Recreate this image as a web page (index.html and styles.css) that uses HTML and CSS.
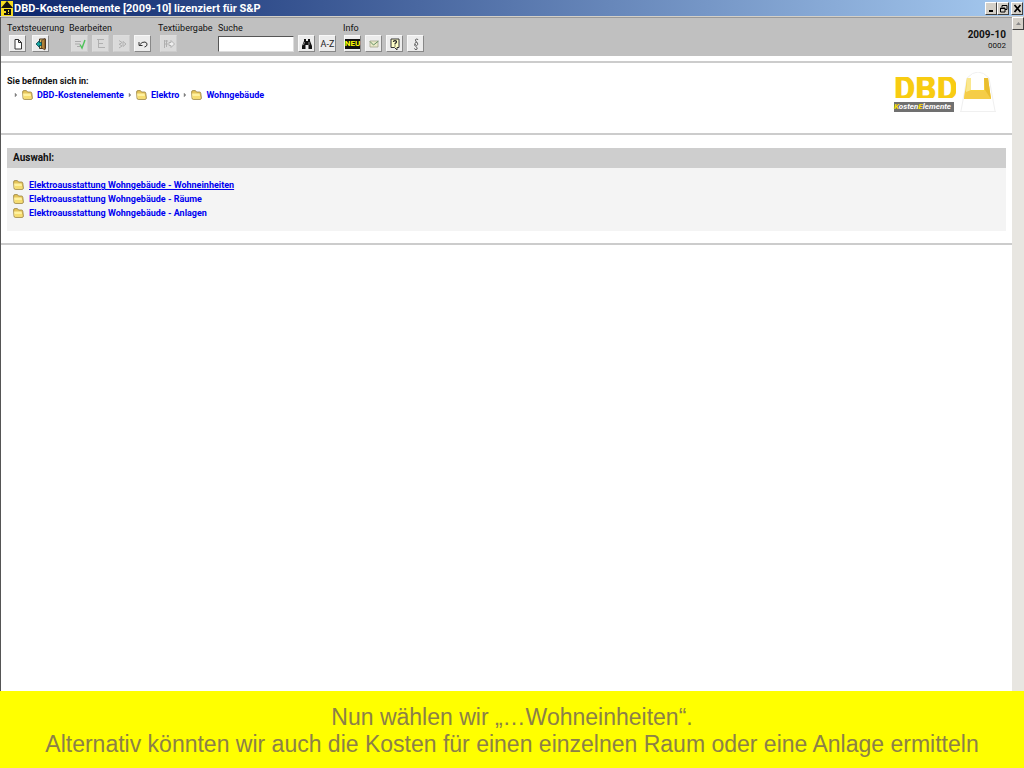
FILE: index.html
```html
<!DOCTYPE html>
<html lang="de">
<head>
  <meta charset="UTF-8">
  <meta name="viewport" content="width=device-width, initial-scale=1.0">
  <title>DBD-Kostenelemente</title>
  <link rel="stylesheet" href="styles.css">
</head>
<body>
  <svg width="0" height="0" class="symbols" aria-hidden="true">
    <symbol id="folder" viewBox="0 0 11 10">
      <path d="M.6 2 Q.6 .6 2 .6 H4.4 L5.6 2 H8.6 Q9.6 2 9.8 3.2 L10.4 8 Q10.4 9.4 9 9.4 H2.4 Q1.2 9.4 1 8.2 Z" fill="#e6c55a" stroke="#97803f" stroke-width=".8"/>
      <path d="M1 3.4 H8 Q8.6 3.4 8.7 4 L9.4 8.4 H2.2 Q1.6 8.4 1.5 7.8 Z" fill="#fff2a0"/>
      <path d="M2 6 H9 L9.4 8.4 H2.2 Z" fill="#f7dd70"/>
    </symbol>
    <symbol id="arrow" viewBox="0 0 4 6">
      <path d="M1 1 L3 3 L1 5 Z" fill="#777" stroke="#999" stroke-width=".5"/>
    </symbol>
  </svg>

  <header class="titlebar">
    <svg class="app-icon" width="12" height="15" viewBox="0 0 12 15" aria-hidden="true">
      <rect width="12" height="15" fill="#f4dc20"/>
      <path d="M6 0 L12 7 H0 Z" fill="#111"/>
      <path d="M3 8 H10 V14 H3 Z" fill="#111"/>
      <path d="M3 10 H5 V12 H3 Z M7 9 H8 V11 H7 Z M7 12 H8 V13 H7 Z" fill="#f4dc20"/>
    </svg>
    <h1>DBD-Kostenelemente [2009-10] lizenziert für S&amp;P</h1>
    <div class="window-buttons">
      <button aria-label="Minimieren"><svg width="9" height="9" viewBox="0 0 9 9"><path d="M2 7 H6" stroke="#000" stroke-width="2"/></svg></button>
      <button aria-label="Wiederherstellen"><svg width="9" height="9" viewBox="0 0 9 9"><path d="M3 3 V1.5 H8 V5.5 H6 M3 1.5 H8" fill="none" stroke="#000"/><path d="M1.5 4 H6 V8 H1.5 Z M1 4.5 H6" fill="none" stroke="#000"/></svg></button>
      <button class="close" aria-label="Schließen"><svg width="9" height="9" viewBox="0 0 9 9"><path d="M1.5 1 L7.5 8 M7.5 1 L1.5 8" stroke="#000" stroke-width="1.7"/></svg></button>
    </div>
  </header>

  <div class="window">
    <div class="page">
      <div class="toolbar">
        <div class="group text-group">
          <span>Textsteuerung</span>
          <div class="tools">
            <button class="tool" aria-label="Neu"><svg width="14" height="14" viewBox="0 0 14 14"><path d="M4 2.5 H7.5 L10.5 5.5 V12 H4 Z M7.5 2.5 V5.5 H10.5" fill="#fff" stroke="#333"/></svg></button>
            <button class="tool" aria-label="Beenden"><svg width="14" height="14" viewBox="0 0 14 14"><path d="M5.5 2 H11.5 V11.5 H5.5 Z" fill="#d8c36a" stroke="#4b3420"/><path d="M7.5 3.5 L11 1.5 V13 L7.5 11 Z" fill="#b07f35" stroke="#4b3420" stroke-width=".7"/><path d="M2 7 L5.5 3.5 V5.5 H7.5 V8.5 H5.5 V10.5 Z" fill="#16a6a0" stroke="#0c4550" stroke-width=".8"/></svg></button>
          </div>
        </div>
        <div class="group edit-group">
          <span>Bearbeiten</span>
          <div class="tools">
            <button class="tool" disabled aria-label="Übernehmen"><svg width="14" height="14" viewBox="0 0 14 14"><path d="M2 4.5 H8 M2 7 H7 M4 9.5 H7" stroke="#aaa"/><path d="M7 7.5 L9 11 L12 3" fill="none" stroke="#4fc25a" stroke-width="1.4"/></svg></button>
            <button class="tool" disabled aria-label="Gliederung"><svg width="14" height="14" viewBox="0 0 14 14"><path d="M3 2.5 H10 M4 6.5 H9 M4 10.5 H11 M4.5 3 V11" stroke="#b0b0b0"/></svg></button>
            <button class="tool" disabled aria-label="Weiter"><svg width="14" height="14" viewBox="0 0 14 14"><path d="M4 3.5 L7 5.5 L4 7.5 M4 7 L7 9 L4 11 M8 4.5 L11 7 L8 9.5 Z" fill="none" stroke="#b0b0b0"/></svg></button>
            <button class="tool" aria-label="Rückgängig"><svg width="14" height="14" viewBox="0 0 14 14"><path d="M3 5 V8.5 H6.5 M3.5 8 Q6 4.5 9 5 Q11.5 5.7 11 8 Q10.6 9.5 8.5 10" fill="none" stroke="#333"/></svg></button>
          </div>
        </div>
        <div class="group transfer-group">
          <span>Textübergabe</span>
          <div class="tools">
            <button class="tool" disabled aria-label="Übergeben"><svg width="14" height="14" viewBox="0 0 14 14"><path d="M2.5 3 V11 M2.5 4 H6 M2.5 7 H6 M4.5 3 V10" stroke="#b0b0b0"/><path d="M7 5.5 H9 V3.5 L12.5 7 L9 10.5 V8.5 H7 Z" fill="#eee" stroke="#b0b0b0"/></svg></button>
          </div>
        </div>
        <div class="group search-group">
          <label for="search">Suche</label>
          <div class="tools">
            <input id="search" type="text">
            <button class="tool" aria-label="Suchen"><svg width="14" height="14" viewBox="0 0 14 14"><path d="M4 2 H6 V4 H8 V2 H10 V4 L12 9 V12 H8.5 V8 H5.5 V12 H2 V9 L4 4 Z" fill="#111"/><path d="M4.5 5 L3.5 8 M9 5 V8" stroke="#aaa" stroke-width=".8"/></svg></button>
            <button class="tool az">A-Z</button>
          </div>
        </div>
        <div class="group info-group">
          <span>Info</span>
          <div class="tools">
            <button class="tool new"><span>NEU</span></button>
            <button class="tool" aria-label="Nachricht"><svg width="14" height="14" viewBox="0 0 14 14"><path d="M3 4 H11 V10 H3 Z" fill="#e9e9c8" stroke="#a5a58e" stroke-width=".8"/><path d="M3 4.5 L6.5 8 L11.5 4" fill="none" stroke="#679267"/></svg></button>
            <button class="tool" aria-label="Hilfe"><svg width="14" height="14" viewBox="0 0 14 14"><path d="M3 2 H11 V10.5 H9 V13 L6.5 10.5 H3 Z" fill="#ffffc8" stroke="#333"/><path d="M5.3 5 Q5.5 3.6 7 3.6 Q8.7 3.7 8.5 5 Q8.3 5.8 7 6.6 V7.5 M7 8.5 V9.6" fill="none" stroke="#222" stroke-width="1.1"/></svg></button>
            <button class="tool" aria-label="Rechtliches"><svg width="14" height="14" viewBox="0 0 14 14"><path d="M9 3 Q8.5 1.5 7.2 2 Q5.8 2.8 6.8 4.2 L8.5 6 Q9.5 8 7.5 8.5 Q5.5 8 6 6.3 Q6.5 5 8 5 M6 7 Q5 8.5 6.7 9.5 L8 10.5 Q8.8 12.5 7 12.7 Q5.6 12.5 5.5 11.3" fill="none" stroke="#555" stroke-width=".9"/></svg></button>
          </div>
        </div>
        <div class="version">
          <strong>2009-10</strong>
          <span>0002</span>
        </div>
      </div>

      <div class="location">
        <nav>
          <p>Sie befinden sich in:</p>
          <div class="path">
            <svg class="arrow"><use href="#arrow"/></svg>
            <a href="#"><svg class="folder"><use href="#folder"/></svg>DBD-Kostenelemente</a>
            <svg class="arrow"><use href="#arrow"/></svg>
            <a href="#"><svg class="folder"><use href="#folder"/></svg>Elektro</a>
            <svg class="arrow"><use href="#arrow"/></svg>
            <a href="#"><svg class="folder"><use href="#folder"/></svg>Wohngebäude</a>
          </div>
        </nav>
        <div class="logo">
          <div class="logo-text">
            <div class="logo-name">DBD</div>
            <div class="logo-sub"><span>K</span>osten<span>E</span>lemente</div>
          </div>
          <svg width="36" height="42" viewBox="0 0 36 42" aria-hidden="true">
            <path d="M7 6 L1 39 M29 6 L35 39 M0 39.5 H36 M7 6 Q18 -6 29 6" fill="none" stroke="#f0f0f0"/>
            <path d="M7 6 H11 V18 H24 V6 H28 L31 27 H4 Z" fill="#f7d23e"/>
            <path d="M5 19 H29 L31 27 H4 Z" fill="#f5cd48"/>
            <path d="M24 6 H28 L31 27 L25 18 Z" fill="#e9bd2f"/>
            <path d="M7 6 H11 V18 L6 20 Z" fill="#fae78e"/>
          </svg>
        </div>
      </div>

      <main class="selection">
        <h2>Auswahl:</h2>
        <ul>
          <li><svg class="folder"><use href="#folder"/></svg><a class="active" href="#">Elektroausstattung Wohngebäude - Wohneinheiten</a></li>
          <li><svg class="folder"><use href="#folder"/></svg><a href="#">Elektroausstattung Wohngebäude - Räume</a></li>
          <li><svg class="folder"><use href="#folder"/></svg><a href="#">Elektroausstattung Wohngebäude - Anlagen</a></li>
        </ul>
      </main>
    </div>
    <div class="scrollbar">
      <button aria-label="Nach oben"><svg width="7" height="5" viewBox="0 0 7 5"><path d="M3.5 1 L6 4 H1 Z" fill="#888"/></svg></button>
    </div>
  </div>

  <footer class="caption">
    <p>Nun wählen wir „…Wohneinheiten“.</p>
    <p>Alternativ könnten wir auch die Kosten für einen einzelnen Raum oder eine Anlage ermitteln</p>
  </footer>
</body>
</html>
```
FILE: styles.css
```css
* {
  margin: 0;
  padding: 0;
  box-sizing: border-box;
}

body {
  min-height: 100vh;
  display: flex;
  flex-direction: column;
  background: #fff;
  color: #111;
  font-family: Roboto, Tahoma, sans-serif;
  font-size: 9px;
  line-height: 14px;
}

button,
input {
  font: inherit;
}

svg {
  flex: none;
  display: block;
}

.symbols {
  position: absolute;
}

/* Title bar */
.titlebar {
  height: 17px;
  display: flex;
  align-items: center;
  gap: 1px;
  padding: 0 1px;
  background: linear-gradient(to right, #0a246a, #a6caf0);
  border-bottom: 1px solid #d4d0c8;
  color: #fff;
}

.titlebar h1 {
  flex: 1;
  padding-top: 1px;
  font-size: 11px;
  line-height: 16px;
  font-weight: 700;
}

.window-buttons {
  display: flex;
}

.window-buttons button,
.scrollbar button {
  width: 12px;
  height: 13px;
  display: flex;
  align-items: center;
  justify-content: center;
  background: #d4d0c8;
  border: 1px solid;
  border-color: #fff #404040 #404040 #fff;
}

.window-buttons .close {
  margin-left: 2px;
}

/* Browser area */
.window {
  flex: 1;
  display: flex;
  border-left: 1px solid #555;
}

.page {
  flex: 1;
}

.toolbar {
  height: 39px;
  display: flex;
  align-items: flex-start;
  padding: 4px 6px;
  background: #c0c0c0;
  border-top: 1px solid #999;
}

.group > span,
.group > label {
  display: block;
  line-height: 13px;
}

.text-group {
  width: 62px;
}

.edit-group {
  width: 89px;
}

.transfer-group {
  width: 60px;
}

.search-group {
  width: 125px;
}

.tools {
  display: flex;
  align-items: center;
  gap: 4px;
}

.text-group .tools {
  gap: 6px;
  padding-left: 2px;
}

.edit-group .tools,
.transfer-group .tools {
  padding-left: 2px;
}

.info-group .tools {
  padding-left: 1px;
}

.tool {
  width: 17px;
  height: 17px;
  display: flex;
  align-items: center;
  justify-content: center;
  background: #ececec;
  border: 1px solid;
  border-color: #f8f8f8 #888 #888 #f8f8f8;
}

.tool:disabled {
  background: #dadada;
  border-color: #ddd #ccc #ccc #ddd;
}

.tool.az {
  color: #222;
}

.new span {
  background: #111;
  color: #ff0;
  font-size: 8px;
  line-height: 10px;
  font-weight: 700;
}

.search-group input {
  width: 76px;
  height: 16px;
  background: #fff;
  border: 1px solid;
  border-color: #555 #ddd #ddd #555;
}

.version {
  margin-left: auto;
  padding-top: 7px;
  display: flex;
  flex-direction: column;
  text-align: right;
  font-size: 8px;
  line-height: 11px;
}

.version strong {
  font-size: 10px;
}

/* Breadcrumb and logo */
.location {
  height: 74px;
  margin-top: 5px;
  padding: 9px 16px 0 6px;
  display: flex;
  justify-content: space-between;
  border-top: 2px solid #ccc;
  border-bottom: 2px solid #ccc;
}

.location nav {
  padding-top: 3px;
  font-weight: 700;
}

.location nav p {
  line-height: 13px;
}

.path {
  display: flex;
  align-items: center;
  gap: 4px;
  padding-left: 7px;
}

.path a {
  display: flex;
  align-items: center;
  gap: 4px;
}

a {
  color: #0000f0;
  font-weight: 700;
  text-decoration: none;
}

a.active,
a:hover {
  text-decoration: underline;
}

.arrow {
  width: 4px;
  height: 6px;
}

.folder {
  width: 11px;
  height: 10px;
}

.logo {
  display: flex;
  gap: 4px;
}

.logo-text {
  width: 62px;
  padding-top: 5px;
}

.logo-name {
  height: 21px;
  overflow: hidden;
  color: #f8cc12;
  font-size: 33px;
  font-weight: 900;
  line-height: 23px;
}

.logo-sub {
  width: 60px;
  margin-top: 4px;
  background: #707070;
  color: #fff;
  font-size: 8px;
  font-style: italic;
  font-weight: 700;
  line-height: 10px;
}

.logo-sub span {
  color: #ffe000;
}

/* Selection list */
.selection {
  padding: 13px 6px 12px;
  border-bottom: 2px solid #ccc;
}

.selection h2 {
  padding: 0 6px;
  background: #cecece;
  font-size: 10px;
  line-height: 20px;
}

.selection ul {
  padding: 10px 6px 11px;
  background: #f4f4f4;
  list-style: none;
}

.selection li {
  display: flex;
  align-items: center;
  gap: 5px;
}

.scrollbar {
  width: 12px;
  background: #e8e6e1;
}

/* Caption */
.caption {
  padding: 13px 0 10px;
  background: #ff0;
  color: #8c8048;
  font-family: "Liberation Sans", Arial, sans-serif;
  font-size: 23px;
  line-height: 27px;
  text-align: center;
}
```
